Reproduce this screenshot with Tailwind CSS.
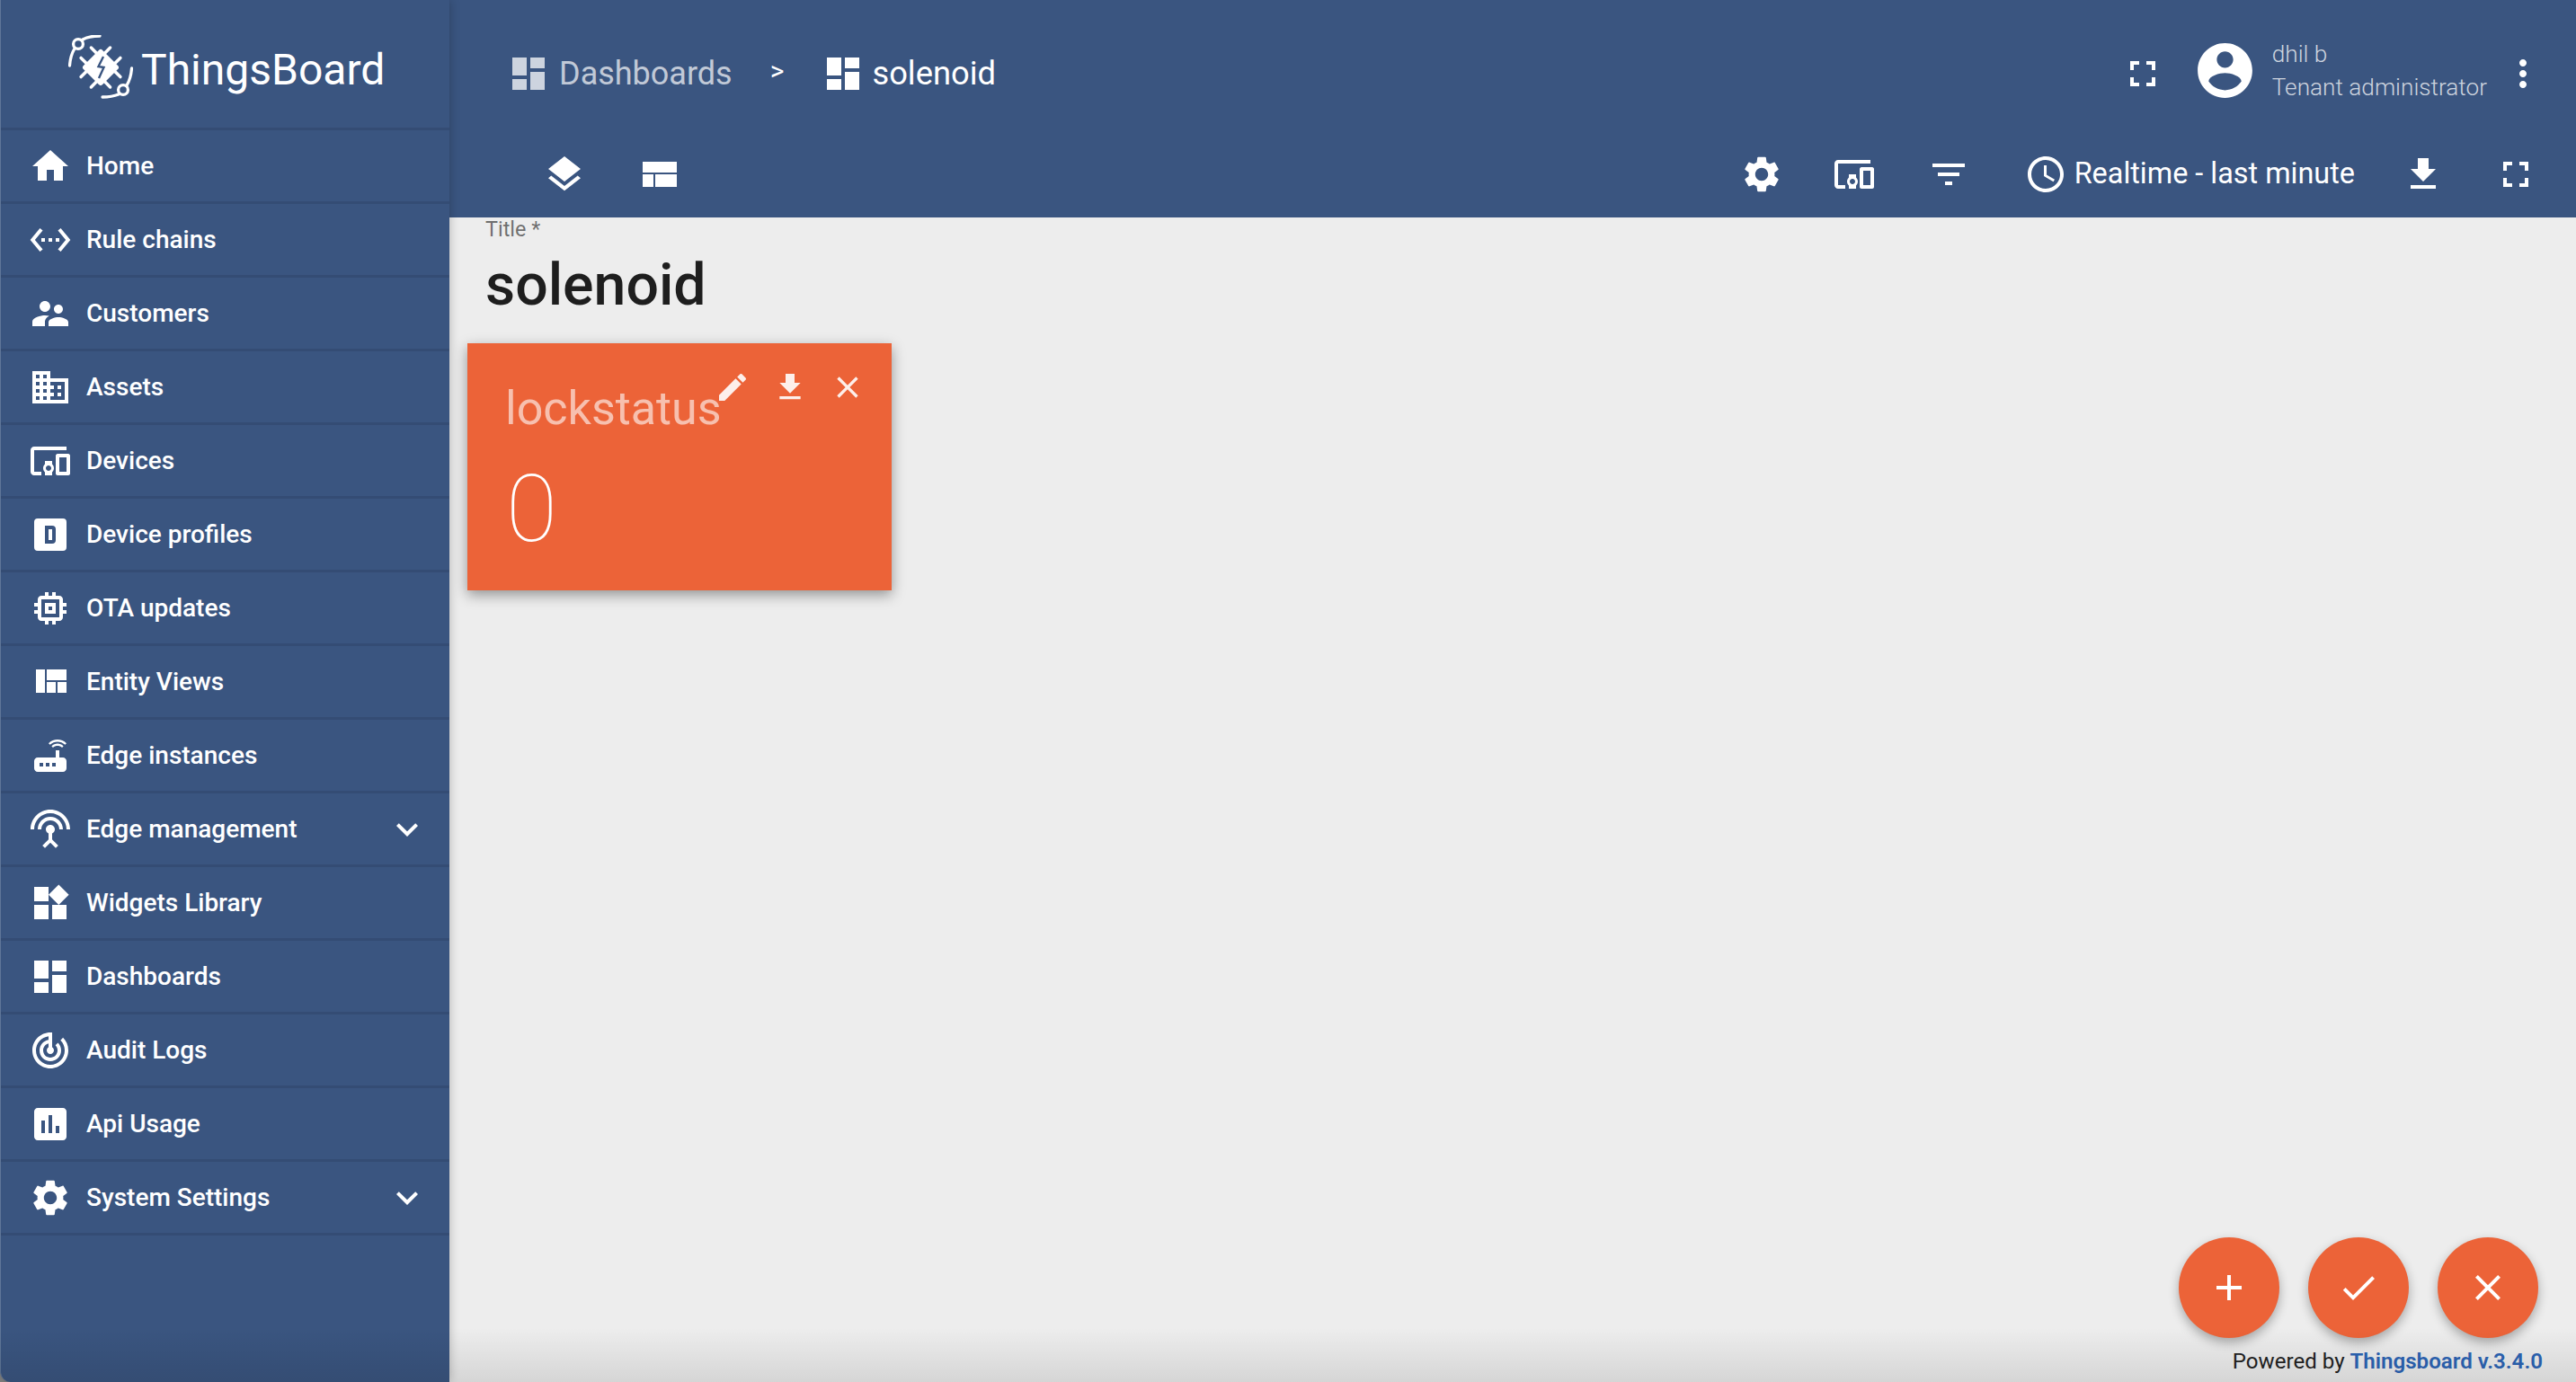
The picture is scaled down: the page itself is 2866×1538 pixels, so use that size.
<!DOCTYPE html>
<html>
<head>
    <title>ThingsBoard | solenoid</title>
    <meta charset="utf-8">
    <script src="https://cdn.jsdelivr.net/npm/@tailwindcss/browser@4"></script>
</head>
<body class="bg-[#8f8f8f] font-['Roboto',sans-serif]">
<div class="relative flex w-[2866px] h-[1538px] overflow-hidden">

    <!-- sidebar -->
    <aside class="relative z-10 w-[500px] shrink-0 bg-[#3a5580] text-white border-l border-[#5f7698] rounded-bl-[12px] shadow-[0_0_12px_rgba(0,0,0,0.25)]">
        <div class="flex items-center h-[145px] pl-[75px] pt-[10px] border-b-[3px] border-[#344c74]">
            <svg class="w-[72px] h-[72px] -mt-[2px]" viewBox="0 0 72 72" fill="none" stroke="white" stroke-linecap="round">
                <circle cx="11" cy="10" r="5.400" stroke-width="3.300"/>
                <path d="M16 5C21 2 27 1 35 1M7 15C4 20 2 27 1.500 34" stroke-width="3.300"/>
                <circle cx="61" cy="61" r="5.400" stroke-width="3.300"/>
                <path d="M56 66C51 68 45 69 38 69M65 56C68 51 70 44 70.500 37" stroke-width="3.300"/>
                <g transform="rotate(45 36 36)">
                    <rect x="21" y="21" width="30" height="30" rx="3" fill="white" stroke="none"/>
                    <path d="M28 13V22M44 13V22M28 50V59M44 50V59M13 28H22M13 44H22M50 28H59M50 44H59" stroke-width="3.500"/>
                </g>
                <path d="M39 24L33.500 35L39.500 36L34 48" stroke="#3a5580" stroke-width="2.400" stroke-linecap="butt"/>
            </svg>
            <span class="ml-[9px] mt-[3px] text-[48px] leading-none">ThingsBoard</span>
        </div>
        <nav class="text-[28px] font-medium">
            <a class="flex items-center h-[82px] pl-[31px] border-b-[3px] border-[#344c74]">
                <svg class="w-[48px] h-[48px] fill-white" viewBox="0 0 24 24"><path d="M10 20v-6h4v6h5v-8h3L12 3 2 12h3v8z"/></svg>
                <span class="ml-[16px]">Home</span>
            </a>
            <a class="flex items-center h-[82px] pl-[31px] border-b-[3px] border-[#344c74]">
                <svg class="w-[48px] h-[48px] fill-white" viewBox="0 0 24 24"><path d="M7.770 6.760L6.230 5.480.82 12l5.410 6.520 1.540-1.280L3.420 12l4.350-5.240zM7 13h2v-2H7v2zm10-2h-2v2h2v-2zm-6 2h2v-2h-2v2zm6.770-7.520l-1.540 1.280L20.580 12l-4.350 5.240 1.540 1.280L23.180 12l-5.410-6.520z"/></svg>
                <span class="ml-[16px]">Rule chains</span>
            </a>
            <a class="flex items-center h-[82px] pl-[31px] border-b-[3px] border-[#344c74]">
                <svg class="w-[48px] h-[48px] fill-white" viewBox="0 0 24 24"><path d="M16.500 12c1.380 0 2.490-1.120 2.490-2.500S17.880 7 16.500 7C15.120 7 14 8.120 14 9.500s1.120 2.500 2.500 2.500zM9 11c1.660 0 2.990-1.340 2.990-3S10.660 5 9 5C7.340 5 6 6.340 6 8s1.340 3 3 3zm7.500 3c-1.830 0-5.500.92-5.500 2.750V19h11v-2.250c0-1.830-3.670-2.750-5.500-2.750zM9 13c-2.330 0-7 1.170-7 3.500V19h7v-2.250c0-.85.33-2.340 2.370-3.470C10.500 13.100 9.660 13 9 13z"/></svg>
                <span class="ml-[16px]">Customers</span>
            </a>
            <a class="flex items-center h-[82px] pl-[31px] border-b-[3px] border-[#344c74]">
                <svg class="w-[48px] h-[48px] fill-white" viewBox="0 0 24 24"><path d="M12 7V3H2v18h20V7H12zM6 19H4v-2h2v2zm0-4H4v-2h2v2zm0-4H4V9h2v2zm0-4H4V5h2v2zm4 12H8v-2h2v2zm0-4H8v-2h2v2zm0-4H8V9h2v2zm0-4H8V5h2v2zm10 12h-8v-2h2v-2h-2v-2h2v-2h-2V9h8v10zm-2-8h-2v2h2v-2zm0 4h-2v2h2v-2z"/></svg>
                <span class="ml-[16px]">Assets</span>
            </a>
            <a class="flex items-center h-[82px] pl-[31px] border-b-[3px] border-[#344c74]">
                <svg class="w-[48px] h-[48px] fill-white" viewBox="0 0 24 24"><path d="M3 6h18V4H3c-1.100 0-2 .9-2 2v12c0 1.100.9 2 2 2h4v-2H3V6zm10 6H9v1.780c-.61.55-1 1.330-1 2.220s.39 1.670 1 2.220V20h4v-1.780c.61-.55 1-1.340 1-2.220s-.39-1.670-1-2.220V12zm-2 5.500c-.83 0-1.500-.67-1.500-1.500s.67-1.500 1.500-1.500 1.500.67 1.500 1.500-.67 1.500-1.500 1.500zM22 8h-6c-.5 0-1 .5-1 1v10c0 .5.5 1 1 1h6c.5 0 1-.5 1-1V9c0-.5-.5-1-1-1zm-1 10h-4v-8h4v8z"/></svg>
                <span class="ml-[16px]">Devices</span>
            </a>
            <a class="flex items-center h-[82px] pl-[31px] border-b-[3px] border-[#344c74]">
                <svg class="w-[48px] h-[48px] fill-white" viewBox="0 0 24 24"><path fill-rule="evenodd" d="M5 3H19A2 2 0 0 1 21 5V19A2 2 0 0 1 19 21H5A2 2 0 0 1 3 19V5A2 2 0 0 1 5 3M9 7V17H13A2 2 0 0 0 15 15V9A2 2 0 0 0 13 7H9M11 9H13V15H11V9Z"/></svg>
                <span class="ml-[16px]">Device profiles</span>
            </a>
            <a class="flex items-center h-[82px] pl-[31px] border-b-[3px] border-[#344c74]">
                <svg class="w-[48px] h-[48px] fill-white" viewBox="0 0 24 24"><path d="M15 9H9v6h6V9zm-2 4h-2v-2h2v2zm8-2V9h-2V7c0-1.100-.9-2-2-2h-2V3h-2v2h-2V3H9v2H7c-1.100 0-2 .9-2 2v2H3v2h2v2H3v2h2v2c0 1.100.9 2 2 2h2v2h2v-2h2v2h2v-2h2c1.100 0 2-.9 2-2v-2h2v-2h-2v-2h2zm-4 6H7V7h10v10z"/></svg>
                <span class="ml-[16px]">OTA updates</span>
            </a>
            <a class="flex items-center h-[82px] pl-[31px] border-b-[3px] border-[#344c74]">
                <svg class="w-[48px] h-[48px] fill-white" viewBox="0 0 24 24"><path d="M10 18h5v-6h-5v6zm-6 0h5V5H4v13zm12 0h5v-6h-5v6zM10 5v6h11V5H10z"/></svg>
                <span class="ml-[16px]">Entity Views</span>
            </a>
            <a class="flex items-center h-[82px] pl-[31px] border-b-[3px] border-[#344c74]">
                <svg class="w-[48px] h-[48px] fill-white" viewBox="0 0 24 24"><path d="M20.200 5.900l.8-.8C19.600 3.700 17.800 3 16 3s-3.600.7-5 2.100l.8.8C13 4.800 14.500 4.200 16 4.200s3 .6 4.200 1.700zm-.9.8c-.9-.9-2.100-1.400-3.300-1.400s-2.400.5-3.300 1.400l.8.8c.7-.7 1.600-1 2.500-1 .9 0 1.800.3 2.500 1l.8-.8zM19 13h-2V9h-2v4H5c-1.100 0-2 .9-2 2v4c0 1.100.9 2 2 2h14c1.100 0 2-.9 2-2v-4c0-1.100-.9-2-2-2zM8 18H6v-2h2v2zm3.500 0h-2v-2h2v2zm3.500 0h-2v-2h2v2z"/></svg>
                <span class="ml-[16px]">Edge instances</span>
            </a>
            <a class="flex items-center h-[82px] pl-[31px] pr-[23px] border-b-[3px] border-[#344c74]">
                <svg class="w-[48px] h-[48px] fill-white" viewBox="0 0 24 24"><path d="M12 5c-3.870 0-7 3.130-7 7h2c0-2.760 2.240-5 5-5s5 2.240 5 5h2c0-3.870-3.130-7-7-7zm1 9.290c.88-.39 1.500-1.260 1.500-2.290 0-1.380-1.120-2.500-2.500-2.500S9.500 10.620 9.500 12c0 1.020.62 1.900 1.500 2.290v3.300L7.590 21 9 22.410l3-3 3 3L16.410 21 13 17.590v-3.300zM12 1C5.930 1 1 5.930 1 12h2c0-4.970 4.030-9 9-9s9 4.030 9 9h2c0-6.070-4.930-11-11-11z"/></svg>
                <span class="ml-[16px]">Edge management</span>
                <svg class="ml-auto w-[48px] h-[48px] fill-white" viewBox="0 0 24 24"><path d="M16.590 8.590L12 13.170 7.410 8.590 6 10l6 6 6-6z"/></svg>
            </a>
            <a class="flex items-center h-[82px] pl-[31px] border-b-[3px] border-[#344c74]">
                <svg class="w-[48px] h-[48px] fill-white" viewBox="0 0 24 24"><path d="M13 13v8h8v-8h-8zM3 21h8v-8H3v8zM3 3v8h8V3H3zm13.660-1.310L11 7.340 16.660 13l5.660-5.660-5.660-5.650z"/></svg>
                <span class="ml-[16px]">Widgets Library</span>
            </a>
            <a class="flex items-center h-[82px] pl-[31px] border-b-[3px] border-[#344c74]">
                <svg class="w-[48px] h-[48px] fill-white" viewBox="0 0 24 24"><path d="M3 13h8V3H3v10zm0 8h8v-6H3v6zm10 0h8V11h-8v10zm0-18v6h8V3h-8z"/></svg>
                <span class="ml-[16px]">Dashboards</span>
            </a>
            <a class="flex items-center h-[82px] pl-[31px] border-b-[3px] border-[#344c74]">
                <svg class="w-[48px] h-[48px] fill-white" viewBox="0 0 24 24"><path d="M19.070 4.930l-1.410 1.410C19.100 7.790 20 9.790 20 12c0 4.420-3.580 8-8 8s-8-3.580-8-8c0-4.080 3.050-7.440 7-7.930v2.020C8.160 6.570 6 9.030 6 12c0 3.310 2.690 6 6 6s6-2.690 6-6c0-1.660-.67-3.160-1.760-4.240l-1.410 1.410C15.550 9.900 16 10.900 16 12c0 2.210-1.790 4-4 4s-4-1.790-4-4c0-1.860 1.280-3.410 3-3.860v2.140c-.6.35-1 .98-1 1.720 0 1.100.9 2 2 2s2-.9 2-2c0-.74-.4-1.380-1-1.720V2h-1C6.480 2 2 6.480 2 12s4.480 10 10 10 10-4.480 10-10c0-2.760-1.120-5.260-2.930-7.070z"/></svg>
                <span class="ml-[16px]">Audit Logs</span>
            </a>
            <a class="flex items-center h-[82px] pl-[31px] border-b-[3px] border-[#344c74]">
                <svg class="w-[48px] h-[48px] fill-white" viewBox="0 0 24 24"><path d="M19 3H5c-1.100 0-2 .9-2 2v14c0 1.100.9 2 2 2h14c1.100 0 2-.9 2-2V5c0-1.100-.9-2-2-2zM9 17H7v-7h2v7zm4 0h-2V7h2v10zm4 0h-2v-4h2v4z"/></svg>
                <span class="ml-[16px]">Api Usage</span>
            </a>
            <a class="flex items-center h-[82px] pl-[31px] pr-[23px] border-b-[3px] border-[#344c74]">
                <svg class="w-[48px] h-[48px] fill-white" viewBox="0 0 24 24"><path d="M19.140 12.940c.04-.3.06-.61.06-.94 0-.32-.02-.64-.07-.94l2.030-1.580c.18-.14.23-.41.12-.61l-1.920-3.320c-.12-.22-.37-.29-.59-.22l-2.390.96c-.5-.38-1.030-.7-1.620-.94l-.36-2.540c-.04-.24-.24-.41-.48-.41h-3.840c-.24 0-.43.17-.47.41l-.36 2.540c-.59.24-1.130.57-1.620.94l-2.390-.96c-.22-.08-.47 0-.59.22L2.740 8.870c-.12.21-.08.47.12.61l2.030 1.580c-.05.3-.09.63-.09.94s.02.64.07.94l-2.030 1.580c-.18.14-.23.41-.12.61l1.920 3.320c.12.22.37.29.59.22l2.390-.96c.5.38 1.030.7 1.620.94l.36 2.540c.05.24.24.41.48.41h3.840c.24 0 .44-.17.47-.41l.36-2.540c.59-.24 1.130-.56 1.620-.94l2.390.96c.22.08.47 0 .59-.22l1.920-3.320c.12-.22.07-.47-.12-.61l-2.010-1.580zM12 15.600c-1.980 0-3.600-1.620-3.600-3.600s1.620-3.600 3.600-3.600 3.600 1.620 3.600 3.600-1.620 3.600-3.600 3.600z"/></svg>
                <span class="ml-[16px]">System Settings</span>
                <svg class="ml-auto w-[48px] h-[48px] fill-white" viewBox="0 0 24 24"><path d="M16.590 8.590L12 13.170 7.410 8.590 6 10l6 6 6-6z"/></svg>
            </a>
        </nav>
    </aside>

    <!-- main -->
    <main class="relative flex-1 flex flex-col bg-[#ededed]">
        <header class="h-[242px] shrink-0 bg-[#3a5580] text-white">
            <div class="flex items-center h-[150px] pl-[64px] pr-[35px] pt-[14px]">
                <svg class="w-[48px] h-[48px] fill-white/75" viewBox="0 0 24 24"><path d="M3 13h8V3H3v10zm0 8h8v-6H3v6zm10 0h8V11h-8v10zm0-18v6h8V3h-8z"/></svg>
                <span class="ml-[10px] text-[36px] text-white/70">Dashboards</span>
                <span class="ml-[42px] -mt-[8px] text-[30px]">&gt;</span>
                <svg class="ml-[42px] w-[48px] h-[48px] fill-white" viewBox="0 0 24 24"><path d="M3 13h8V3H3v10zm0 8h8v-6H3v6zm10 0h8V11h-8v10zm0-18v6h8V3h-8z"/></svg>
                <span class="ml-[8px] text-[36.300px]">solenoid</span>

                <svg class="ml-auto w-[48px] h-[48px] fill-white" viewBox="0 0 24 24"><path d="M7 14H5v5h5v-2H7v-3zm-2-4h2V7h3V5H5v5zm12 7h-3v2h5v-5h-2v3zM14 5v2h3v3h2V5h-5z"/></svg>
                <svg class="ml-[31px] -mt-[8px] w-[73px] h-[73px] fill-white" viewBox="0 0 24 24"><path d="M12 2C6.480 2 2 6.480 2 12s4.480 10 10 10 10-4.480 10-10S17.520 2 12 2zm0 3c1.660 0 3 1.340 3 3s-1.340 3-3 3-3-1.340-3-3 1.340-3 3-3zm0 14.200c-2.500 0-4.710-1.280-6-3.220.03-1.990 4-3.080 6-3.080 1.990 0 5.970 1.090 6 3.080-1.290 1.940-3.500 3.220-6 3.220z"/></svg>
                <div class="ml-[16px] flex flex-col -mt-[7px] font-light text-[26.200px] text-white/75 leading-[37px]">
                    <span>dhil b</span>
                    <span>Tenant administrator</span>
                </div>
                <svg class="ml-[16px] w-[48px] h-[48px] fill-white" viewBox="0 0 24 24"><path d="M12 8c1.100 0 2-.9 2-2s-.9-2-2-2-2 .9-2 2 .9 2 2 2zm0 2c-1.100 0-2 .9-2 2s.9 2 2 2 2-.9 2-2-.9-2-2-2zm0 6c-1.100 0-2 .9-2 2s.9 2 2 2 2-.9 2-2-.9-2-2-2z"/></svg>
            </div>
            <div class="flex items-center h-[92px] pl-[104px] pr-[43px] -mt-[2px]">
                <svg class="w-[48px] h-[48px] fill-white" viewBox="0 0 24 24"><path d="M11.990 18.540l-7.370-5.730L3 14.070l9 7 9-7-1.630-1.270-7.380 5.740zM12 16l7.360-5.730L21 9l-9-7-9 7 1.630 1.270L12 16z"/></svg>
                <svg class="ml-[57px] w-[48px] h-[48px] fill-white" viewBox="0 0 24 24"><path d="M3 19h6v-7H3v7zm7 0h12v-7H10v7zM3 5v6h19V5H3z"/></svg>

                <svg class="ml-auto w-[48px] h-[48px] fill-white" viewBox="0 0 24 24"><path d="M19.140 12.940c.04-.3.06-.61.06-.94 0-.32-.02-.64-.07-.94l2.030-1.580c.18-.14.23-.41.12-.61l-1.920-3.320c-.12-.22-.37-.29-.59-.22l-2.390.96c-.5-.38-1.030-.7-1.620-.94l-.36-2.540c-.04-.24-.24-.41-.48-.41h-3.840c-.24 0-.43.17-.47.41l-.36 2.540c-.59.24-1.130.57-1.620.94l-2.390-.96c-.22-.08-.47 0-.59.22L2.740 8.870c-.12.21-.08.47.12.61l2.030 1.580c-.05.3-.09.63-.09.94s.02.64.07.94l-2.030 1.580c-.18.14-.23.41-.12.61l1.920 3.320c.12.22.37.29.59.22l2.390-.96c.5.38 1.030.7 1.620.94l.36 2.540c.05.24.24.41.48.41h3.840c.24 0 .44-.17.47-.41l.36-2.540c.59-.24 1.130-.56 1.620-.94l2.390.96c.22.08.47 0 .59-.22l1.920-3.320c.12-.22.07-.47-.12-.61l-2.010-1.580zM12 15.600c-1.980 0-3.600-1.620-3.600-3.600s1.620-3.600 3.600-3.600 3.600 1.620 3.600 3.600-1.620 3.600-3.600 3.600z"/></svg>
                <svg class="ml-[55px] w-[48px] h-[48px] fill-white" viewBox="0 0 24 24"><path d="M3 6h18V4H3c-1.100 0-2 .9-2 2v12c0 1.100.9 2 2 2h4v-2H3V6zm10 6H9v1.780c-.61.55-1 1.330-1 2.220s.39 1.670 1 2.220V20h4v-1.780c.61-.55 1-1.340 1-2.220s-.39-1.670-1-2.220V12zm-2 5.500c-.83 0-1.500-.67-1.500-1.500s.67-1.500 1.500-1.500 1.500.67 1.500 1.500-.67 1.500-1.500 1.500zM22 8h-6c-.5 0-1 .5-1 1v10c0 .5.5 1 1 1h6c.5 0 1-.5 1-1V9c0-.5-.5-1-1-1zm-1 10h-4v-8h4v8z"/></svg>
                <svg class="ml-[57px] w-[48px] h-[48px] fill-white" viewBox="0 0 24 24"><path d="M10 18h4v-2h-4v2zM3 6v2h18V6H3zm3 7h12v-2H6v2z"/></svg>
                <svg class="ml-[60px] w-[48px] h-[48px] fill-white" viewBox="0 0 24 24"><path d="M11.990 2C6.470 2 2 6.480 2 12s4.470 10 9.990 10C17.520 22 22 17.520 22 12S17.520 2 11.990 2zM12 20c-4.420 0-8-3.580-8-8s3.580-8 8-8 8 3.580 8 8-3.580 8-8 8zm.5-13H11v6l5.250 3.150.75-1.230-4.500-2.670z"/></svg>
                <span class="ml-[8px] -mt-[2px] text-[32.400px]">Realtime - last minute</span>
                <svg class="ml-[52px] w-[48px] h-[48px] fill-white" viewBox="0 0 24 24"><path d="M19 9h-4V3H9v6H5l7 7 7-7zM5 18v2h14v-2H5z"/></svg>
                <svg class="ml-[55px] w-[48px] h-[48px] fill-white" viewBox="0 0 24 24"><path d="M7 14H5v5h5v-2H7v-3zm-2-4h2V7h3V5H5v5zm12 7h-3v2h5v-5h-2v3zM14 5v2h3v3h2V5h-5z"/></svg>
            </div>
        </header>

        <div class="flex-1 pl-[40px]">
            <div class="text-[23.400px] leading-[26px] text-black/55">Title *</div>
            <h1 class="mt-[11px] text-[64.400px] leading-[77px] font-medium text-[#1e1e1e]">solenoid</h1>
            <!-- widget -->
            <div class="relative -ml-[20px] mt-[26px] w-[472px] h-[275px] bg-[#ec6338] shadow-[0_5px_14px_rgba(0,0,0,0.38)]">
                <div class="absolute left-[42px] top-[42px] text-[52px] leading-[62px] font-normal text-white/60">lockstatus</div>
                <div class="absolute left-[43px] top-[120px] text-[104px] leading-[130px] font-thin text-white">0</div>
                <div class="absolute right-[29px] top-[29px] flex gap-[24px]">
                    <svg class="w-[40px] h-[40px] fill-white/90" viewBox="0 0 24 24"><path d="M3 17.250V21h3.750L17.810 9.940l-3.750-3.750L3 17.250zM20.710 7.040c.39-.39.39-1.020 0-1.410l-2.340-2.340c-.39-.39-1.020-.39-1.410 0l-1.830 1.830 3.750 3.750 1.830-1.830z"/></svg>
                    <svg class="w-[40px] h-[40px] fill-white/90" viewBox="0 0 24 24"><path d="M19 9h-4V3H9v6H5l7 7 7-7zM5 18v2h14v-2H5z"/></svg>
                    <svg class="w-[40px] h-[40px] fill-white/90" viewBox="0 0 24 24"><path d="M19 6.410L17.590 5 12 10.590 6.410 5 5 6.410 10.590 12 5 17.590 6.410 19 12 13.410 17.590 19 19 17.590 13.410 12z"/></svg>
                </div>
            </div>
        </div>

        <!-- fabs -->
        <div class="absolute right-[42px] bottom-[49px] flex gap-[32px]">
            <button class="flex items-center justify-center w-[112px] h-[112px] rounded-full bg-[#ec6338] shadow-[0_5px_12px_rgba(0,0,0,0.3)]">
                <svg class="w-[48px] h-[48px] fill-white" viewBox="0 0 24 24"><path d="M19 13h-6v6h-2v-6H5v-2h6V5h2v6h6v2z"/></svg>
            </button>
            <button class="flex items-center justify-center w-[112px] h-[112px] rounded-full bg-[#ec6338] shadow-[0_5px_12px_rgba(0,0,0,0.3)]">
                <svg class="w-[48px] h-[48px] fill-white" viewBox="0 0 24 24"><path d="M9 16.200L4.800 12l-1.400 1.400L9 19 21 7l-1.400-1.400L9 16.200z"/></svg>
            </button>
            <button class="flex items-center justify-center w-[112px] h-[112px] rounded-full bg-[#ec6338] shadow-[0_5px_12px_rgba(0,0,0,0.3)]">
                <svg class="w-[48px] h-[48px] fill-white" viewBox="0 0 24 24"><path d="M19 6.410L17.590 5 12 10.590 6.410 5 5 6.410 10.590 12 5 17.590 6.410 19 12 13.410 17.590 19 19 17.590 13.410 12z"/></svg>
            </button>
        </div>
        <div class="absolute right-[37px] bottom-[9px] text-[24.100px] leading-[28px] text-[#222222]">Powered by <span class="font-semibold text-[#2c64b4]">Thingsboard v.3.4.0</span></div>
    </main>

    <!-- window bottom shade -->
    <div class="absolute z-20 left-0 right-0 bottom-0 h-[60px] pointer-events-none bg-linear-to-t from-black/10 to-transparent"></div>
</div>
</body>
</html>
